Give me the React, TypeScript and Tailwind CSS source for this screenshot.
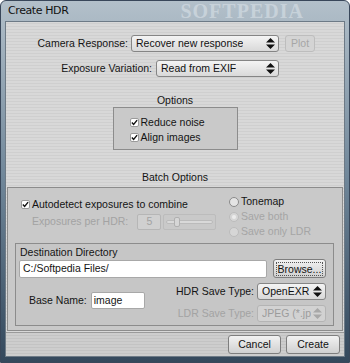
import React from 'react'

const font = "font-['Liberation_Sans',Arial,sans-serif]"

const UpDown: React.FC<{ disabled?: boolean }> = ({ disabled }) => (
  <svg width="9" height="11" viewBox="0 0 9 11" className="shrink-0">
    <path d="M4.5 0 L9 4.5 L0 4.5 Z M0 6.5 L9 6.5 L4.5 11 Z" fill={disabled ? '#a8a8a8' : '#111'} />
  </svg>
)

const Select: React.FC<{ label: string; width: string; disabled?: boolean }> = ({ label, width, disabled }) => (
  <div
    className={`${width} h-[17px] shrink-0 flex items-center justify-between gap-[2px] pl-[4px] pr-[3px] rounded-[3px] border overflow-hidden whitespace-nowrap ${
      disabled
        ? 'border-[#b4b4b4] bg-[#d2d2d2] text-[#9c9c9c]'
        : 'border-[#858585] bg-gradient-to-b from-[#f4f4f4] to-[#d9d9d9] text-[#111]'
    }`}
  >
    <span className="overflow-hidden">{label}</span>
    <UpDown disabled={disabled} />
  </div>
)

const Check: React.FC = () => (
  <span className="w-[9px] h-[9px] rounded-[2px] bg-white border border-[#9a9a9a] flex items-center justify-center shrink-0">
    <svg width="8" height="7" viewBox="0 0 8 7">
      <path d="M1 3.5 L3 5.8 L7 0.8" stroke="#111" strokeWidth="1.6" fill="none" />
    </svg>
  </span>
)

const Radio: React.FC<{ on?: boolean; dark?: boolean }> = ({ on, dark }) => (
  <span
    className={`w-[10px] h-[10px] rounded-full border flex items-center justify-center shrink-0 ${
      dark ? 'border-[#8a8a8a] bg-[#e4e4e4]' : 'border-[#bcbcbc] bg-[#d6d6d6]'
    }`}
  >
    {on && <span className="w-[4px] h-[4px] rounded-full bg-[#ececec]" />}
  </span>
)

const Button: React.FC<{ children: React.ReactNode; className?: string; disabled?: boolean }> = ({ children, className, disabled }) => (
  <div
    className={`flex items-center justify-center rounded-[3px] border whitespace-nowrap shrink-0 ${
      disabled
        ? 'border-[#bdbdbd] bg-[#d4d4d4] text-[#a6a6a6]'
        : 'border-[#7e7e7e] bg-gradient-to-b from-[#f2f2f2] to-[#d0d0d0] text-[#111]'
    } ${className ?? ''}`}
  >
    {children}
  </div>
)

const stripes =
  'bg-[repeating-linear-gradient(0deg,#d8d8d8_0px,#d8d8d8_2px,#cfcfcf_2px,#cfcfcf_3px)]'
const stripesDark =
  'bg-[repeating-linear-gradient(0deg,#cdcdcd_0px,#cdcdcd_2px,#c3c3c3_2px,#c3c3c3_3px)]'

export default function App() {
  return (
    <div
      className={`w-[350px] h-[363px] flex flex-col px-[4px] pb-[5px] rounded-t-[6px] border border-[#39475a] bg-gradient-to-b from-[#b3c0ca] via-[#6f8699] to-[#34485c] ${font}`}
    >
      {/* title bar */}
      <div className="h-[20px] flex items-center overflow-hidden shrink-0 whitespace-nowrap">
        <span className="pl-[3px] text-[11px] text-[#111] font-['DejaVu_Sans',sans-serif] tracking-[-0.4px]">Create HDR</span>
        <span className="ml-[112px] text-[20px] font-bold tracking-[1px] text-[#d3dce3]/70 font-['Liberation_Serif',serif]">SOFTPEDIA</span>
      </div>

      {/* dialog body */}
      <div className={`flex-1 flex flex-col border border-[#6d7a86] text-[10.5px] text-[#141414] whitespace-nowrap ${stripes}`}>
        <div className="h-[311px] shrink-0 flex flex-col border-b border-[#9a9a9a]">
          {/* camera response */}
          <div className="flex items-center pl-[31px] pt-[13px]">
            <span className="w-[94px] text-right pr-[3px]">Camera Response:</span>
            <Select label="Recover new response" width="w-[148px]" />
            <Button disabled className="ml-[6px] w-[30px] h-[17px]">Plot</Button>
          </div>
          {/* exposure variation */}
          <div className="flex items-center pl-[55px] mt-[8px]">
            <span className="w-[95px] text-right pr-[4px]">Exposure Variation:</span>
            <Select label="Read from EXIF" width="w-[123px]" />
          </div>

          {/* options */}
          <div className="text-center mt-[17px] leading-[13px]">Options</div>
          <div className="mx-auto w-[125px] h-[43px] border border-[#8c8c8c] bg-[#c9c9c9] flex flex-col pl-[16px] pt-[8px] gap-[2px]">
            <div className="flex items-center gap-[2px] leading-[13px]">
              <Check />
              <span>Reduce noise</span>
            </div>
            <div className="flex items-center gap-[2px] leading-[13px]">
              <Check />
              <span>Align images</span>
            </div>
          </div>

          {/* batch options */}
          <div className="text-center mt-[21px] leading-[13px]">Batch Options</div>
          <div className="mx-[1px] mt-[3px] h-[144px] border border-[#8c8c8c] bg-[#c9c9c9] flex flex-col">
            <div className="h-[55px] flex items-start shrink-0">
              <div className="flex flex-col pl-[13px] pt-[10px] w-[221px]">
                <div className="flex items-center gap-[2px] leading-[13px]">
                  <Check />
                  <span>Autodetect exposures to combine</span>
                </div>
                <div className="flex items-center mt-[3px] pl-[11px] text-[#a3a3a3]">
                  <span className="mr-[9px]">Exposures per HDR:</span>
                  <div className="w-[24px] h-[16px] border border-[#b6b6b6] rounded-[2px] bg-[#d0d0d0] flex items-center justify-center">5</div>
                  <div className="ml-[2px] w-[53px] h-[16px] border border-[#bcbcbc] rounded-[2px] flex items-center px-[2px] relative">
                    <div className="w-full h-[4px] border border-[#bbbbbb] rounded-full bg-[#d9d9d9]" />
                    <div className="absolute left-[10px] top-[2px] w-[6px] h-[10px] border border-[#b0b0b0] rounded-[2px] bg-[#d6d6d6]" />
                  </div>
                </div>
              </div>
              <div className="flex flex-col leading-[15px] pt-[6px]">
                <div className="flex items-center gap-[2px]">
                  <Radio dark />
                  <span>Tonemap</span>
                </div>
                <div className="flex items-center gap-[2px] text-[#a5a5a5]">
                  <Radio on />
                  <span>Save both</span>
                </div>
                <div className="flex items-center gap-[2px] text-[#a5a5a5]">
                  <Radio />
                  <span>Save only LDR</span>
                </div>
              </div>
            </div>

            {/* destination */}
            <div className="ml-[7px] mr-[8px] h-[83px] border border-[#8c8c8c] bg-[#c6c6c6] flex flex-col pl-[3px] pr-[7px]">
              <div className="leading-[13px] pt-[2px] pl-[1px]">Destination Directory</div>
              <div className="flex items-center">
                <div className="w-[248px] h-[18px] bg-white border border-[#a8a8a8] rounded-[2px] flex items-center pl-[3px]">C:/Softpedia Files/</div>
                <Button className="ml-[6px] w-[53px] h-[19px]">
                  <span className="border border-dotted border-[#555] px-[1px] leading-[12px]">Browse...</span>
                </Button>
              </div>
              <div className="flex justify-between mt-[5px]">
                <div className="flex items-center pl-[10px] pt-[9px] self-start">
                  <span className="mr-[4px]">Base Name:</span>
                  <div className="w-[54px] h-[17px] bg-white border border-[#a8a8a8] rounded-[2px] flex items-center pl-[2px]">image</div>
                </div>
                <div className="flex flex-col gap-[5px]">
                  <div className="flex items-center justify-end">
                    <span className="mr-[3px]">HDR Save Type:</span>
                    <Select label="OpenEXR (*.exr)" width="w-[69px]" />
                  </div>
                  <div className="flex items-center justify-end">
                    <span className="mr-[3px] text-[#a3a3a3]">LDR Save Type:</span>
                    <Select label="JPEG (*.jpg)" width="w-[69px]" disabled />
                  </div>
                </div>
              </div>
            </div>
          </div>
        </div>

        {/* buttons */}
        <div className={`flex-1 flex items-start justify-end gap-[5px] pr-[4px] pt-[2px] ${stripesDark}`}>
          <Button className="w-[53px] h-[19px]">Cancel</Button>
          <Button className="w-[54px] h-[19px]">Create</Button>
        </div>
      </div>
    </div>
  )
}
